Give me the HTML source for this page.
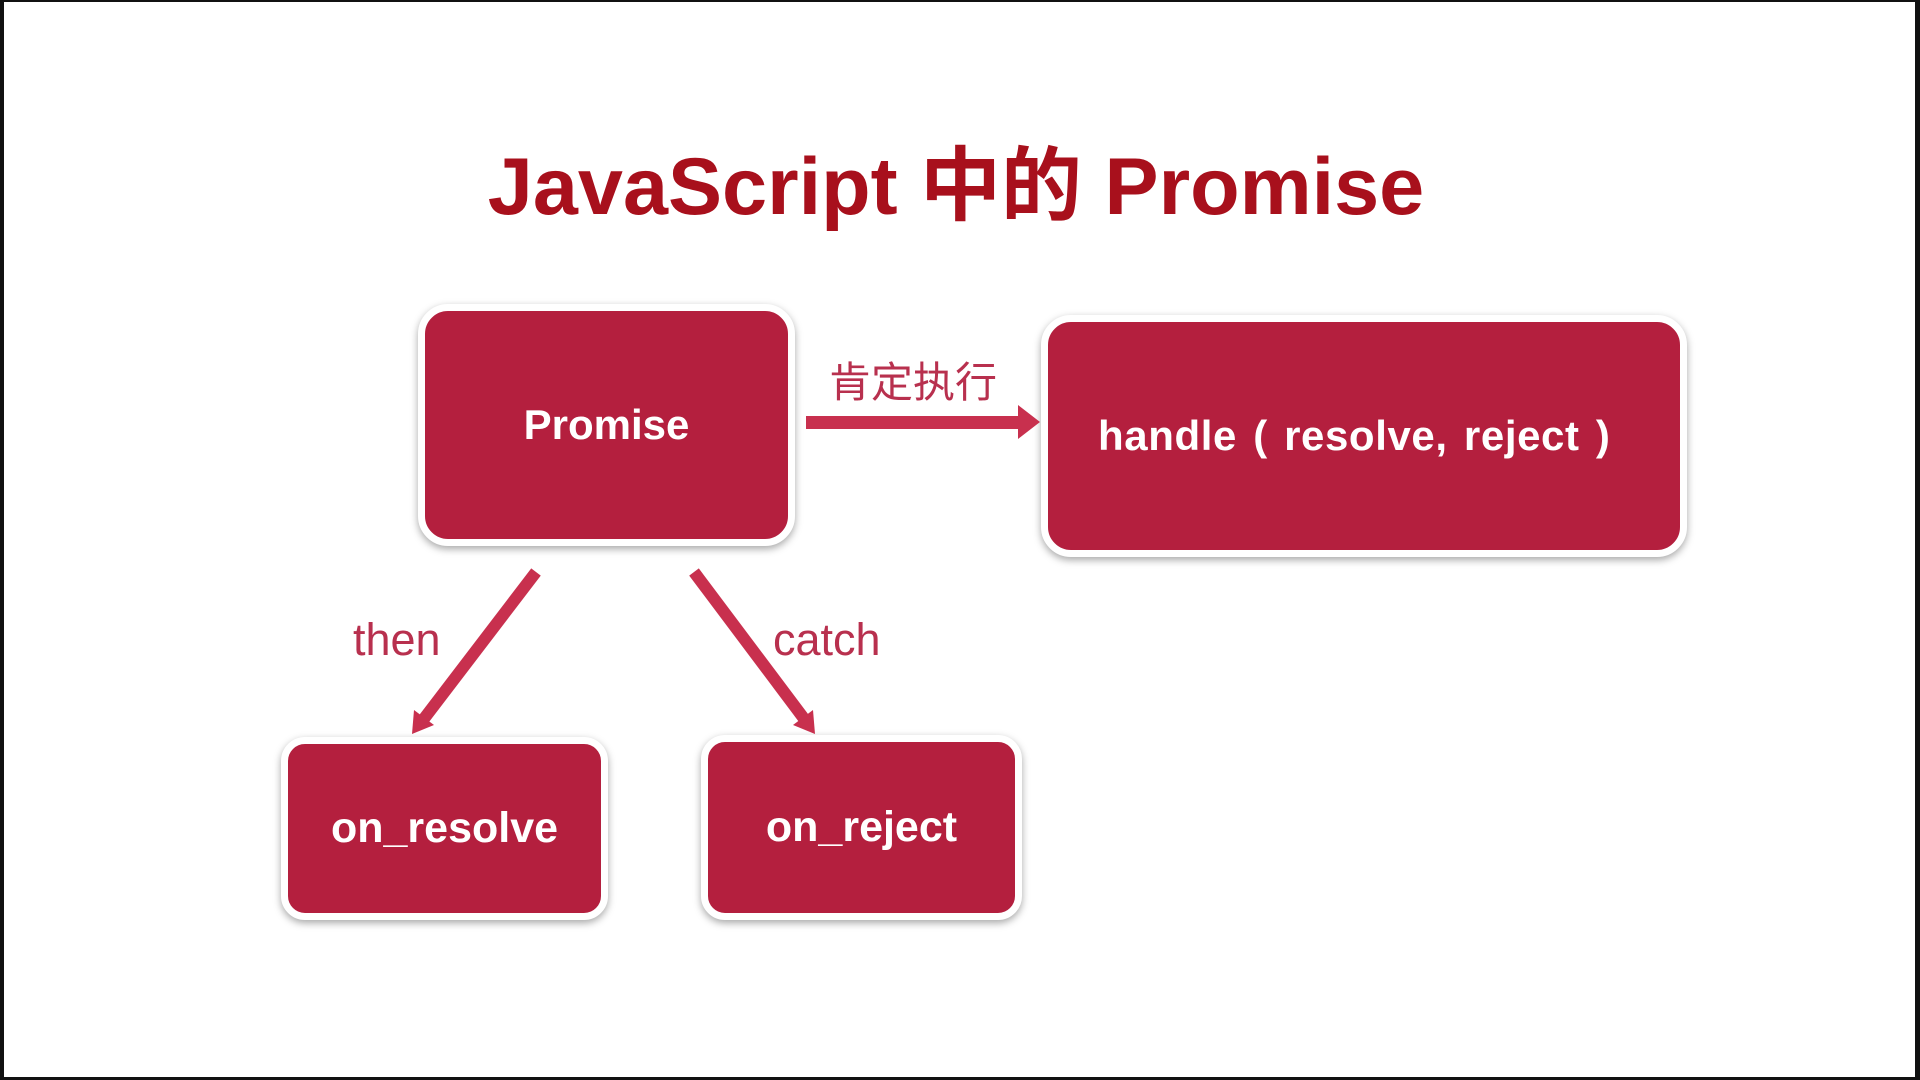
<!DOCTYPE html>
<html><head><meta charset="utf-8"><style>
html,body{margin:0;padding:0}
body{width:1920px;height:1080px;position:relative;background:#fff;overflow:hidden;font-family:"Liberation Sans","Noto Sans CJK SC",sans-serif}
.frame{position:absolute;inset:0;border-left:4px solid #111;border-top:2px solid #111;border-right:5px solid #111;border-bottom:3px solid #111;box-sizing:border-box}
.title{position:absolute;left:0;width:1920px;top:140px;text-align:center;font-size:81px;font-weight:bold;color:#a8101c;line-height:94px;letter-spacing:0px;text-indent:-8px}
.box{position:absolute;background:#b41f3e;border:7px solid #fff;border-radius:30px;box-shadow:0 3px 8px rgba(0,0,0,.35);color:#fff;font-weight:bold;font-size:42px;display:flex;align-items:center;justify-content:center;box-sizing:border-box}
.lbl{position:absolute;color:#b8304e;font-size:45px;line-height:48px}
</style></head><body>
<div class="frame"></div>
<div class="title">JavaScript 中的 Promise</div>
<div class="box" style="left:418px;top:304px;width:377px;height:242px">Promise</div>
<div class="box" style="left:1041px;top:315px;width:646px;height:242px;justify-content:flex-start;padding-left:50px;letter-spacing:0.6px;word-spacing:4px">handle ( resolve, reject )</div>
<div class="box" style="left:281px;top:737px;width:327px;height:183px;border-radius:24px;font-size:43px">on_resolve</div>
<div class="box" style="left:701px;top:735px;width:321px;height:185px;border-radius:24px;font-size:43px">on_reject</div>
<div class="lbl" style="left:829px;top:359px;font-size:42px">肯定执行</div>
<div class="lbl" style="left:353px;top:616px">then</div>
<div class="lbl" style="left:773px;top:616px">catch</div>
<svg width="1920" height="1080" style="position:absolute;left:0;top:0">
<g fill="#c8304e">
<rect x="806" y="416" width="216" height="13"/>
<polygon points="1018,405 1040,422 1018,439"/>
</g>
<g stroke="#c8304e" stroke-width="12" fill="none">
<line x1="536" y1="572" x2="423" y2="720"/>
<line x1="694" y1="572" x2="805" y2="720"/>
</g>
<g fill="#c8304e">
<polygon points="412,734 414,710 434,725"/>
<polygon points="815,734 813,710 793,725"/>
</g>
</svg>
</body></html>
